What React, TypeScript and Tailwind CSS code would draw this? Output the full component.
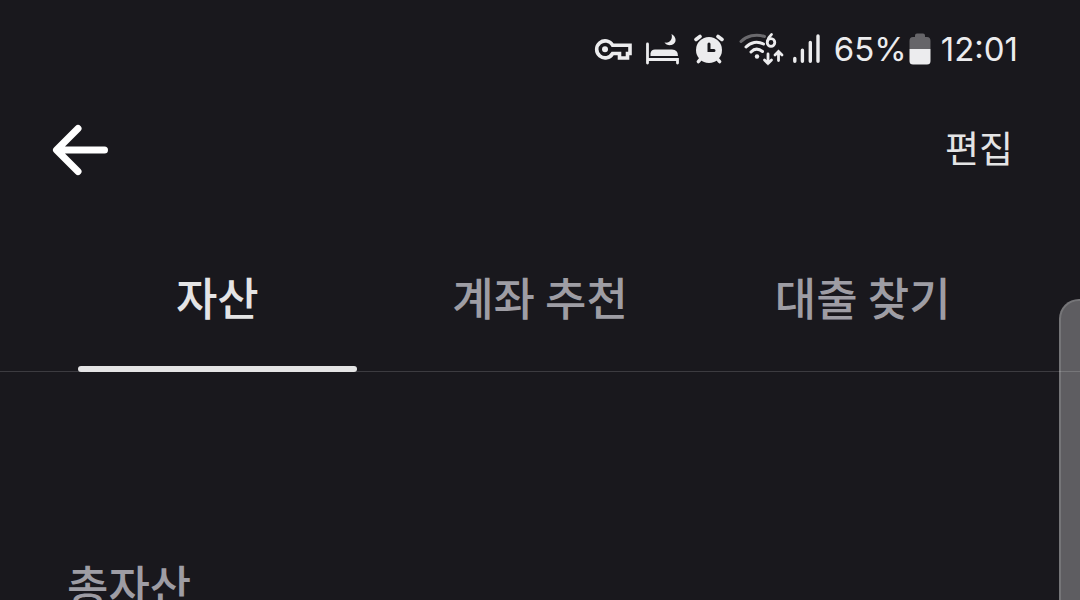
import { useState } from "react";

const TABS = ["자산", "계좌 추천", "대출 찾기"];

export default function App() {
  const [active, setActive] = useState(0);

  return (
    <div className="relative h-screen overflow-hidden bg-[#19181d] font-['Noto_Sans_CJK_KR',sans-serif]">
      <StatusBar />

      <header className="flex h-[102px] items-start justify-between pt-[23px] pr-[67px] pl-[50px]">
        <button type="button" aria-label="뒤로">
          <BackIcon />
        </button>
        <button type="button" className="text-[37px] leading-[52px] text-[#e4e4e5]">
          편집
        </button>
      </header>

      <nav className="flex h-[172px] border-b border-[#3c3b40] px-14">
        {TABS.map((tab, i) => (
          <button
            key={tab}
            type="button"
            onClick={() => setActive(i)}
            className={`relative flex flex-1 justify-center pt-[67px] text-[45px] leading-[60px] font-medium ${
              i === active ? "text-[#e4e4e5]" : "text-[#9e9da4]"
            }`}
          >
            {tab}
            {i === active && (
              <span className="absolute inset-x-[22px] -bottom-px h-1.5 rounded-full bg-[#e4e4e5]" />
            )}
          </button>
        ))}
      </nav>

      <main className="px-[67px] pt-[183px]">
        <h1 className="text-[45px] leading-[60px] font-medium text-[#9e9da4]">총자산</h1>
      </main>

      {/* edge panel, slightly see-through so the tab divider stays visible */}
      <div className="absolute top-[299px] -right-5 -bottom-1 w-[41px] rounded-tl-[20px] border-2 border-white/15 bg-white/30" />
    </div>
  );
}

function StatusBar() {
  return (
    <div className="flex h-[98px] items-center justify-end pr-[62px] font-['Inter',sans-serif] text-[33px] leading-[40px] text-[#ececee]">
      <KeyIcon />
      <BedIcon />
      <AlarmIcon />
      <WifiIcon />
      <SignalIcon />
      <span className="ml-3.5">65%</span>
      <BatteryIcon />
      <span className="ml-2.5">12:01</span>
    </div>
  );
}

function KeyIcon() {
  return (
    <svg width="38" height="36" viewBox="0 0 38 36" fill="none" stroke="currentColor">
      <path
        d="M18.6 14.2H36V22.5H33.5V27H25.5V22.5H18.6A8.5 8.5 0 1 1 18.6 14.2Z"
        strokeWidth="3.6"
      />
      <circle cx="11" cy="18.3" r="3" fill="currentColor" stroke="none" />
    </svg>
  );
}

function BedIcon() {
  return (
    <svg className="ml-3" width="36" height="36" viewBox="0 0 36 36" fill="currentColor">
      <path
        d="M3.5 13V32M3.5 28.5H33.5V32"
        fill="none"
        stroke="currentColor"
        strokeWidth="2.8"
        strokeLinecap="round"
      />
      <path d="M6.5 25V22.5Q7 18.5 11 18.5H28Q34 18.5 34 25Z" />
      <path d="M27.5 3C33 6 33 12.5 27.5 14C24.5 14.5 21.5 13.5 20.5 11.5C26 12.5 29 8 27.5 3Z" />
    </svg>
  );
}

function AlarmIcon() {
  return (
    <svg
      className="ml-3"
      width="32"
      height="36"
      viewBox="0 0 32 36"
      fill="none"
      stroke="currentColor"
      strokeLinecap="round"
    >
      <circle cx="17" cy="19" r="13" fill="currentColor" stroke="none" />
      <path
        d="M4 8.5L8 5.5M30 8.5L26 5.5M8.5 28L6.5 30.5M25.5 28L27.5 30.5"
        strokeWidth="3.6"
      />
      <path d="M17 13V19.5H22" stroke="#19181d" strokeWidth="3" />
    </svg>
  );
}

function WifiIcon() {
  return (
    <svg
      className="ml-3.5"
      width="46"
      height="36"
      viewBox="0 0 46 36"
      fill="none"
      stroke="currentColor"
      strokeWidth="3"
      strokeLinecap="round"
    >
      <path d="M3 10.5C8.5 5 17.5 2.5 26.5 5.5" stroke="#6a696d" />
      <path d="M8 16C12.5 11 19.5 9.8 25.5 13M13 21C16.5 17.3 20.5 17.3 24.5 20.5" />
      <circle cx="19" cy="25.5" r="2.2" fill="currentColor" stroke="none" />
      <circle cx="33" cy="11.5" r="3.8" strokeWidth="2.8" />
      <path d="M29.3 10.5Q30 6.5 33.5 3.5" strokeWidth="2.8" />
      <path
        d="M30 23V32.5M26.5 29L30 32.5L33.5 29M40.5 29.5V20.5M37 24L40.5 20.5L44 24"
        strokeWidth="2.8"
      />
    </svg>
  );
}

function SignalIcon() {
  return (
    <svg
      className="ml-2"
      width="28"
      height="36"
      viewBox="0 0 28 36"
      fill="none"
      stroke="currentColor"
      strokeWidth="3.4"
      strokeLinecap="round"
    >
      <path d="M2.8 27.5V30.2M10.4 19.3V30.2M18.3 11.5V30.2M26 5V30.2" />
    </svg>
  );
}

function BatteryIcon() {
  return (
    <svg className="ml-0.5" width="22" height="36" viewBox="0 0 22 36">
      <path
        d="M6 4.5Q6 2.5 8 2.5H14Q16 2.5 16 4.5V6H18Q21.5 6 21.5 10V18H0.5V10Q0.5 6 4 6H6Z"
        fill="#666569"
      />
      <path d="M0.5 18H21.5V30Q21.5 33.5 18 33.5H4Q0.5 33.5 0.5 30Z" fill="currentColor" />
    </svg>
  );
}

function BackIcon() {
  return (
    <svg
      width="60"
      height="58"
      viewBox="0 0 60 58"
      fill="none"
      stroke="#fff"
      strokeWidth="7"
      strokeLinecap="round"
      strokeLinejoin="round"
    >
      <path d="M54.5 29H8M28 7.5L6.5 29L28 50.5" />
    </svg>
  );
}
